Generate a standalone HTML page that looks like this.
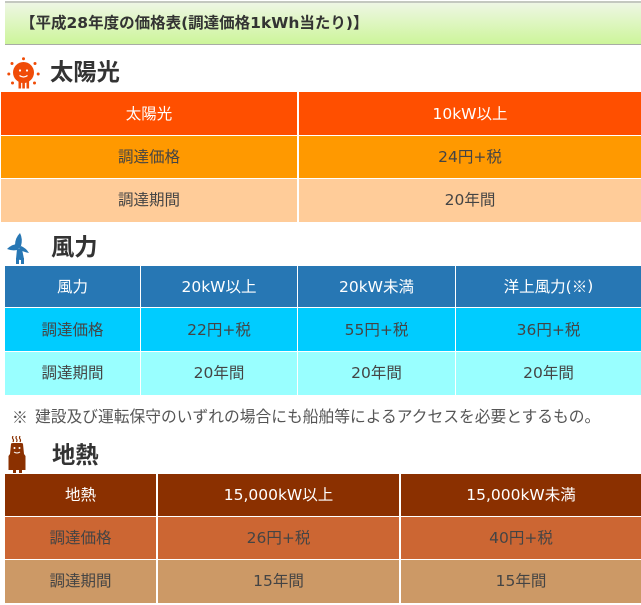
<!DOCTYPE html>
<html lang="ja">
<head>
<meta charset="utf-8">
<style>
html,body{margin:0;padding:0;background:#fff;}
body{position:relative;width:641px;height:605px;overflow:hidden;font-family:"DejaVu Sans","Noto Sans CJK JP",sans-serif;color:#444;}
.c{position:absolute;display:flex;align-items:center;justify-content:center;font-size:15.5px;white-space:nowrap;box-sizing:border-box;padding-bottom:2px;}
.p{padding-bottom:4px;}
.w{color:#fff;}
.h{position:absolute;font-size:23.3px;font-weight:bold;color:#333;line-height:30px;white-space:nowrap;}
.j{font-family:"Noto Sans CJK JP",sans-serif;}
svg{position:absolute;}
</style>
</head>
<body>
<div style="position:absolute;left:5px;top:1px;width:636px;height:44px;box-sizing:border-box;border-top:2px solid #c4c8c0;border-bottom:1px solid #a8aca4;background:linear-gradient(#eef6e4,#cdf59a);"></div>
<div style="position:absolute;left:20px;top:13px;font-size:15.5px;font-weight:bold;color:#333;line-height:20px;white-space:nowrap;">【平成28年度の価格表(調達価格1kWh当たり)】</div>

<svg style="left:7px;top:57px" width="33" height="34" viewBox="0 0 33 34">
<g fill="#f04c08"><circle cx="16.500" cy="15.500" r="10.500"/><rect x="11.500" y="24" width="2.600" height="7.500"/><rect x="15.300" y="24" width="2.600" height="7.500"/><rect x="19.500" y="24" width="2.600" height="7.500"/>
<circle cx="16.500" cy="1.800" r="1.500"/><circle cx="5" cy="6.500" r="1.500"/><circle cx="28" cy="6.500" r="1.500"/><circle cx="1.800" cy="17" r="1.500"/><circle cx="31.200" cy="17" r="1.500"/><circle cx="5.500" cy="26" r="1.500"/><circle cx="27.500" cy="26" r="1.500"/></g>
<circle cx="13" cy="13.500" r="1.100" fill="#fff"/><circle cx="20" cy="13.500" r="1.100" fill="#fff"/>
<path d="M12.500 18.500q4 3 8 0" stroke="#fff" stroke-width="1.300" fill="none"/>
</svg>
<div class="h" style="left:50px;top:58px;">太陽光</div>

<div class="c w" style="left:1px;top:92px;width:296px;height:43px;background:#ff4f00;">太陽光</div>
<div class="c w" style="left:299px;top:92px;width:342px;height:43px;background:#ff4f00;">10kW以上</div>
<div class="c" style="left:1px;top:136px;width:296px;height:42px;background:#ff9900;">調達価格</div>
<div class="c" style="left:299px;top:136px;width:342px;height:42px;background:#ff9900;">24円+税</div>
<div class="c p" style="left:1px;top:179px;width:296px;height:43px;background:#ffcc99;">調達期間</div>
<div class="c p" style="left:299px;top:179px;width:342px;height:43px;background:#ffcc99;">20年間</div>

<svg style="left:5px;top:231px" width="27" height="35" viewBox="0 0 27 35">
<g fill="#2777b4"><path d="M15 2q3 6 1 13l-2 2-4-3q0-7 5-12z"/><path d="M2 18q5-5 11-5l3 3-4 3q-5 1-10-1z"/><path d="M16 15q5 2 8 7-6-1-10-4z"/><path d="M12 18h5l2 10q-1 2-8 0z"/><rect x="11" y="27" width="3" height="6"/><rect x="16" y="27" width="3" height="6"/></g>
</svg>
<div class="h" style="left:51px;top:233px;">風力</div>

<div class="c w" style="left:5px;top:266px;width:135px;height:41px;background:#2777b4;">風力</div>
<div class="c w" style="left:141px;top:266px;width:156px;height:41px;background:#2777b4;">20kW以上</div>
<div class="c w" style="left:298px;top:266px;width:157px;height:41px;background:#2777b4;">20kW未満</div>
<div class="c w" style="left:456px;top:266px;width:185px;height:41px;background:#2777b4;">洋上風力(<span class="j">※</span>)</div>
<div class="c" style="left:5px;top:308px;width:135px;height:43px;background:#00ccff;">調達価格</div>
<div class="c" style="left:141px;top:308px;width:156px;height:43px;background:#00ccff;">22円+税</div>
<div class="c" style="left:298px;top:308px;width:157px;height:43px;background:#00ccff;">55円+税</div>
<div class="c" style="left:456px;top:308px;width:185px;height:43px;background:#00ccff;">36円+税</div>
<div class="c p" style="left:5px;top:352px;width:135px;height:43px;background:#99ffff;">調達期間</div>
<div class="c p" style="left:141px;top:352px;width:156px;height:43px;background:#99ffff;">20年間</div>
<div class="c p" style="left:298px;top:352px;width:157px;height:43px;background:#99ffff;">20年間</div>
<div class="c p" style="left:456px;top:352px;width:185px;height:43px;background:#99ffff;">20年間</div>

<div class="j" style="position:absolute;left:12px;top:407px;font-size:15.8px;line-height:20px;color:#555;white-space:nowrap;">※</div>
<div style="position:absolute;left:35px;top:407px;font-size:15.75px;line-height:20px;color:#555;white-space:nowrap;">建設及び運転保守のいずれの場合にも船舶等によるアクセスを必要とするもの。</div>

<svg style="left:8px;top:436px" width="18" height="37" viewBox="0 0 18 37">
<g fill="#8b3000"><path d="M3 8q0-1 2-1h8q2 0 2 1l1 10 1.500 2v14H.5V20l1.500-2z"/><rect x="5" y="33" width="3" height="4"/><rect x="11" y="33" width="3" height="4"/></g>
<g stroke="#8b3000" stroke-width="1.200" fill="none"><path d="M5 0q-1 2 0 3t0 3"/><path d="M8.500 0q-1 2 0 3t0 3"/><path d="M12 0q-1 2 0 3t0 3"/></g>
<circle cx="6.500" cy="12" r="1" fill="#fff"/><circle cx="11.500" cy="12" r="1" fill="#fff"/>
<path d="M6 16q3 2 6 0" stroke="#fff" stroke-width="1" fill="none"/>
</svg>
<div class="h" style="left:52px;top:441px;">地熱</div>

<div class="c w" style="left:5px;top:474px;width:151px;height:42px;background:#8b3000;">地熱</div>
<div class="c w" style="left:158px;top:474px;width:241px;height:42px;background:#8b3000;">15,000kW以上</div>
<div class="c w" style="left:401px;top:474px;width:240px;height:42px;background:#8b3000;">15,000kW未満</div>
<div class="c" style="left:5px;top:517px;width:151px;height:42px;background:#cc6633;">調達価格</div>
<div class="c" style="left:158px;top:517px;width:241px;height:42px;background:#cc6633;">26円+税</div>
<div class="c" style="left:401px;top:517px;width:240px;height:42px;background:#cc6633;">40円+税</div>
<div class="c p" style="left:5px;top:560px;width:151px;height:43px;background:#cc9966;">調達期間</div>
<div class="c p" style="left:158px;top:560px;width:241px;height:43px;background:#cc9966;">15年間</div>
<div class="c p" style="left:401px;top:560px;width:240px;height:43px;background:#cc9966;">15年間</div>
</body>
</html>
